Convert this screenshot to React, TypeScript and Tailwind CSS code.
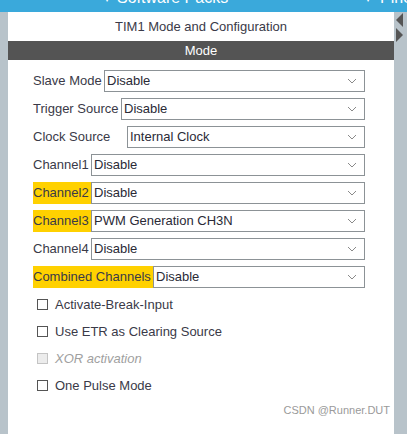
import React from 'react'

type Row = { label: string; value: string; w: string; hl?: boolean }

const rows: Row[] = [
  { label: 'Slave Mode', value: 'Disable', w: 'w-[71px]' },
  { label: 'Trigger Source', value: 'Disable', w: 'w-[88px]' },
  { label: 'Clock Source', value: 'Internal Clock', w: 'w-[94px]' },
  { label: 'Channel1', value: 'Disable', w: 'w-[58px]' },
  { label: 'Channel2', value: 'Disable', w: 'w-[58px]', hl: true },
  { label: 'Channel3', value: 'PWM Generation CH3N', w: 'w-[58px]', hl: true },
  { label: 'Channel4', value: 'Disable', w: 'w-[58px]' },
  { label: 'Combined Channels', value: 'Disable', w: 'w-[120px]', hl: true },
]

const checks = [
  { label: 'Activate-Break-Input' },
  { label: 'Use ETR as Clearing Source' },
  { label: 'XOR activation', disabled: true },
  { label: 'One Pulse Mode' },
]

function Chevron() {
  return (
    <svg width="10" height="6" viewBox="0 0 10 6" className="shrink-0">
      <path d="M1 1 L5 5 L9 1" fill="none" stroke="#8a8a8a" strokeWidth="1" />
    </svg>
  )
}

export default function App() {
  return (
    <div className="w-[407px] h-[434px] flex flex-col overflow-hidden bg-white font-['Liberation_Sans',Arial,sans-serif] text-[13px] text-[#3a3a48]">
      <div className="h-[12px] shrink-0 bg-[#3aa9db] overflow-hidden flex items-start text-white text-[16px] leading-[16px]">
        <div className="ml-[104px] -mt-[10px] flex items-center gap-[7px] w-[256px] shrink-0">
          <span className="text-[12px]">▾</span>
          <span>Software Packs</span>
        </div>
        <div className="ml-[5px] -mt-[10px] flex items-center gap-[9px] whitespace-nowrap">
          <span className="text-[12px]">▾</span>
          <span>Pinout</span>
        </div>
      </div>
      <div className="flex flex-1">
        <div className="w-[8px] bg-[#b8c3ca]" />
        <div className="w-[386px] flex flex-col bg-white">
          <div className="h-[29px] flex items-center justify-center">TIM1 Mode and Configuration</div>
          <div className="h-[19px] bg-[#545454] text-white flex items-center justify-center">Mode</div>
          <div className="pl-[25px] pr-[29px] pt-[10px] flex flex-col gap-[6px]">
            {rows.map((r) => (
              <div key={r.label} className="flex h-[22px]">
                <div className={`${r.w} shrink-0 flex items-center whitespace-nowrap ${r.hl ? 'bg-[#ffd100]' : ''}`}>
                  {r.label}
                </div>
                <div className="flex-1 border border-[#8c9296] flex items-center justify-between pl-[2px] pr-[7px] text-[#2a2a36]">
                  <span>{r.value}</span>
                  <Chevron />
                </div>
              </div>
            ))}
          </div>
          <div className="pl-[29px] pt-[3px] flex flex-col">
            {checks.map((c) => (
              <div key={c.label} className="h-[27px] flex items-center gap-[7px]">
                <span
                  className={`w-[11px] h-[11px] border ${c.disabled ? 'border-[#c4c4c4] bg-[#ececec]' : 'border-[#555555] bg-white'}`}
                />
                <span className={c.disabled ? 'italic text-[#a0a0a0]' : ''}>{c.label}</span>
              </div>
            ))}
          </div>
          <div className="flex justify-end pr-[4px] pt-[3px] text-[11px] text-[#9a9a9a]">CSDN @Runner.DUT</div>
        </div>
        <div className="w-[13px] bg-[#b8c3ca] flex flex-col pl-[1px] pt-[1px]">
          <svg width="9" height="30" viewBox="0 0 9 30">
            <path d="M8 0 L1 7 L8 14 Z" fill="#555555" />
            <path d="M1 15 L8 22 L1 29 Z" fill="#555555" />
          </svg>
        </div>
      </div>
    </div>
  )
}
